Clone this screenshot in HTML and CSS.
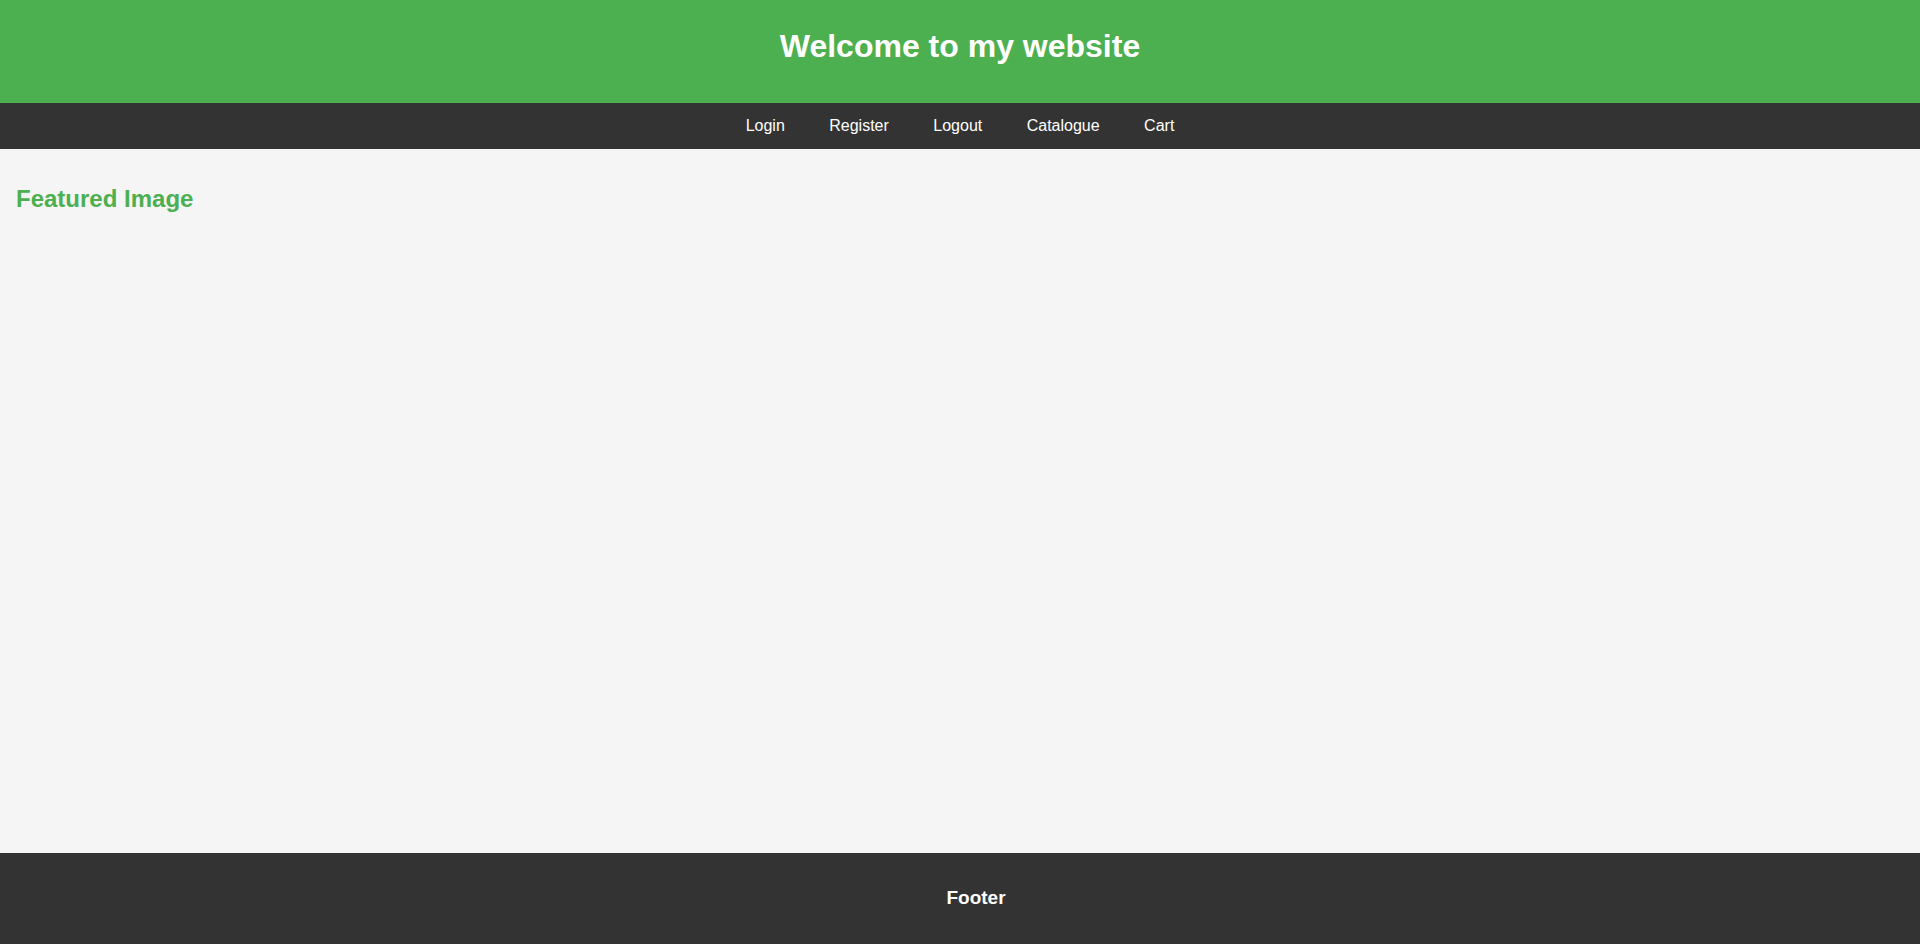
FILE: index.html
```html
<!DOCTYPE html>
<html lang="en">
<head>
<meta charset="utf-8">
<title>Welcome to my website</title>
<link rel="stylesheet" href="styles.css">
</head>
<body>
<header class="site-header">
  <h1 class="site-title">Welcome to my website</h1>
</header>
<nav class="site-nav">
  <a class="nav-link" href="#login">Login</a>
  <a class="nav-link" href="#register">Register</a>
  <a class="nav-link" href="#logout">Logout</a>
  <a class="nav-link" href="#catalogue">Catalogue</a>
  <a class="nav-link" href="#cart">Cart</a>
</nav>
<main class="content">
  <h2 class="section-title">Featured Image</h2>
</main>
<footer class="site-footer">
  <h3 class="footer-title">Footer</h3>
</footer>
</body>
</html>
```
FILE: styles.css
```css
* {
  box-sizing: border-box;
}

body {
  display: flex;
  flex-direction: column;
  min-height: 100vh;
  margin: 0;
  background: #f5f5f5;
  color: #333;
  font-family: "Liberation Sans", Arial, sans-serif;
  font-size: 16px;
}

.site-header {
  padding: 28px 16px 38px;
  background: #4caf50;
  color: #fff;
  text-align: center;
}

.site-title {
  margin: 0;
  font-size: 32px;
  line-height: 37px;
}

.site-nav {
  padding: 14px 16px;
  background: #333;
  line-height: 18px;
  text-align: center;
}

.nav-link {
  display: inline-block;
  padding: 0 20px;
  color: #fff;
  text-decoration: none;
}

.content {
  flex: 1;
  padding: 36px 16px;
}

.section-title {
  margin: 0;
  color: #4caf50;
  font-size: 24px;
  line-height: 28px;
}

.site-footer {
  padding: 34px 0 36px 32px;
  background: #333;
  color: #fff;
  text-align: center;
}

.footer-title {
  margin: 0;
  font-size: 19px;
  line-height: 21px;
}
```
